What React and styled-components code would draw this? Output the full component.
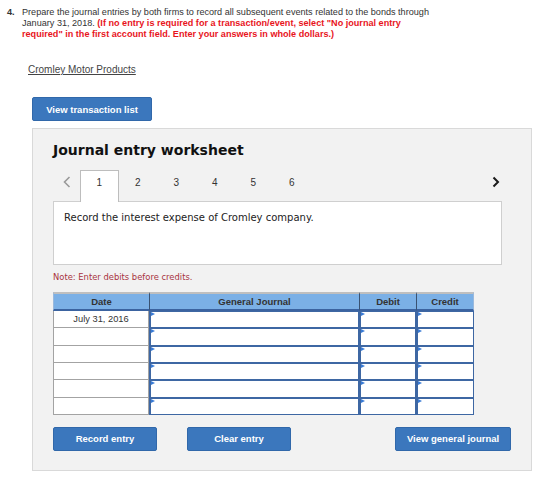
import React from "react";
import styled, { createGlobalStyle } from "styled-components";

const Global = createGlobalStyle`
  html, body { margin: 0; padding: 0; background: #fff; }
  body { font-family: "Liberation Sans", Arial, sans-serif; }
  * { box-sizing: border-box; }
`;

const Page = styled.div`
  width: 560px;
  height: 479px;
  overflow: hidden;
`;

const Question = styled.div`
  display: flex;
  padding: 7px 0 0 7px;
  font-size: 9.1px;
  line-height: 11px;
  color: #333;
`;

const QNum = styled.span`
  width: 15px;
  flex: none;
  font-weight: bold;
`;

const QText = styled.div`
  width: 412px;
`;

const Red = styled.b`
  color: #e8141c;
`;

const CompanyLink = styled.a`
  display: block;
  margin: 24px 0 0 28px;
  font-size: 10px;
  line-height: 12px;
  color: #444;
  text-decoration: underline;
`;

const Button = styled.button`
  display: flex;
  align-items: center;
  justify-content: center;
  height: 24px;
  width: ${(p) => p.$w}px;
  padding: 0;
  background: #3b77bd;
  border: 1px solid #3168aa;
  border-radius: 2px;
  color: #fff;
  font-family: "Liberation Sans", Arial, sans-serif;
  font-weight: bold;
  font-size: 9.5px;
  cursor: pointer;
`;

const TopButtonWrap = styled.div`
  margin: 21px 0 0 32px;
`;

const Panel = styled.div`
  margin: 7px 0 0 32px;
  width: 500px;
  height: 343px;
  background: #f2f2f2;
  border: 1px solid #d9d9d9;
  padding: 13px 29px 0 20px;
  font-family: "DejaVu Sans", Verdana, sans-serif;
`;

const Title = styled.h2`
  margin: 0;
  font-size: 14px;
  line-height: 17px;
  font-weight: bold;
  color: #111;
`;

const TabsRow = styled.div`
  display: flex;
  align-items: flex-end;
  height: 31px;
  margin-top: 11px;
`;

const Chevron = styled.div`
  width: 27px;
  height: 31px;
  display: flex;
  align-items: flex-start;
  padding-top: 6px;
  justify-content: ${(p) => (p.$right ? "flex-end" : "center")};
  padding-right: ${(p) => (p.$right ? "2px" : "0")};
  margin-left: ${(p) => (p.$right ? "auto" : "0")};
`;

const Tab = styled.div`
  width: 38.5px;
  height: 32px;
  padding-top: 6px;
  text-align: center;
  font-family: "Liberation Sans", Arial, sans-serif;
  font-size: 10px;
  line-height: 11px;
  color: #333;
  position: relative;
  z-index: 1;
  background: ${(p) => (p.$active ? "#fff" : "transparent")};
  border: 1px solid ${(p) => (p.$active ? "#bdbdbd" : "transparent")};
  border-bottom: none;
  margin-bottom: -1px;
`;

const ContentBox = styled.div`
  width: 449px;
  height: 64px;
  background: #fff;
  border: 1px solid #cfcfcf;
  padding: 10px 10px;
  font-size: 10px;
  line-height: 12px;
  color: #222;
`;

const Note = styled.div`
  margin-top: 7px;
  font-size: 8.4px;
  line-height: 10px;
  color: #a8323e;
`;

const Grid = styled.div`
  margin-top: 10px;
  width: 421px;
  display: grid;
  grid-template-columns: 96px 210px 57px 58px;
  font-family: "Liberation Sans", Arial, sans-serif;
`;

const HeadCell = styled.div`
  height: 19px;
  background: #7bb0e6;
  border-top: 2px solid #bfbfbf;
  border-bottom: 2px solid #3b63a0;
  border-left: ${(p) => (p.$first ? "1px solid #9ab9dd" : "1px solid #3a5272")};
  border-right: ${(p) => (p.$last ? "1px solid #9ab9dd" : "none")};
  display: flex;
  align-items: center;
  justify-content: center;
  font-size: 9.5px;
  font-weight: bold;
  color: #333;
`;

const DateCell = styled.div`
  height: 17.33px;
  background: #fff;
  border: 1px solid #a3a3a3;
  border-top: none;
  display: flex;
  align-items: center;
  justify-content: center;
  font-size: 9.3px;
  color: #333;
`;

const InputCell = styled.div`
  height: 17.33px;
  background: #fff;
  border: 1px solid #3e67a3;
  border-left-width: 2px;
  position: relative;
  &::before {
    content: "";
    position: absolute;
    left: 0;
    top: 0;
    border-top: 2px solid transparent;
    border-bottom: 2px solid transparent;
    border-left: 4px solid #3a7bd5;
  }
`;

const ButtonsRow = styled.div`
  display: flex;
  gap: 30px;
  width: 458px;
  margin-top: 12px;
`;

const RightSlot = styled.div`
  margin-left: auto;
`;

const LeftChev = () => (
  <svg width="8" height="12" viewBox="0 0 8 12">
    <polyline points="6.5,1 1.5,6 6.5,11" fill="none" stroke="#9a9a9a" strokeWidth="1.6" />
  </svg>
);

const RightChev = () => (
  <svg width="8" height="12" viewBox="0 0 8 12">
    <polyline points="1.5,1.5 6,6 1.5,10.5" fill="none" stroke="#1b1b1b" strokeWidth="2" />
  </svg>
);

const rows = ["July 31, 2016", "", "", "", "", ""];

export default function App() {
  return (
    <Page>
      <Global />
      <Question>
        <QNum>4.</QNum>
        <QText>
          Prepare the journal entries by both firms to record all subsequent events related to the bonds through
          January 31, 2018. <Red>(If no entry is required for a transaction/event, select "No journal entry
          required" in the first account field. Enter your answers in whole dollars.)</Red>
        </QText>
      </Question>
      <CompanyLink href="#">Cromley Motor Products</CompanyLink>
      <TopButtonWrap>
        <Button $w={120}>View transaction list</Button>
      </TopButtonWrap>
      <Panel>
        <Title>Journal entry worksheet</Title>
        <TabsRow>
          <Chevron><LeftChev /></Chevron>
          {[1, 2, 3, 4, 5, 6].map((n) => (
            <Tab key={n} $active={n === 1}>{n}</Tab>
          ))}
          <Chevron $right><RightChev /></Chevron>
        </TabsRow>
        <ContentBox>Record the interest expense of Cromley company.</ContentBox>
        <Note>Note: Enter debits before credits.</Note>
        <Grid>
          <HeadCell $first>Date</HeadCell>
          <HeadCell>General Journal</HeadCell>
          <HeadCell>Debit</HeadCell>
          <HeadCell $last>Credit</HeadCell>
          {rows.map((d, i) => (
            <React.Fragment key={i}>
              <DateCell>{d}</DateCell>
              <InputCell />
              <InputCell />
              <InputCell />
            </React.Fragment>
          ))}
        </Grid>
        <ButtonsRow>
          <Button $w={104}>Record entry</Button>
          <Button $w={104}>Clear entry</Button>
          <RightSlot>
            <Button $w={116}>View general journal</Button>
          </RightSlot>
        </ButtonsRow>
      </Panel>
    </Page>
  );
}
